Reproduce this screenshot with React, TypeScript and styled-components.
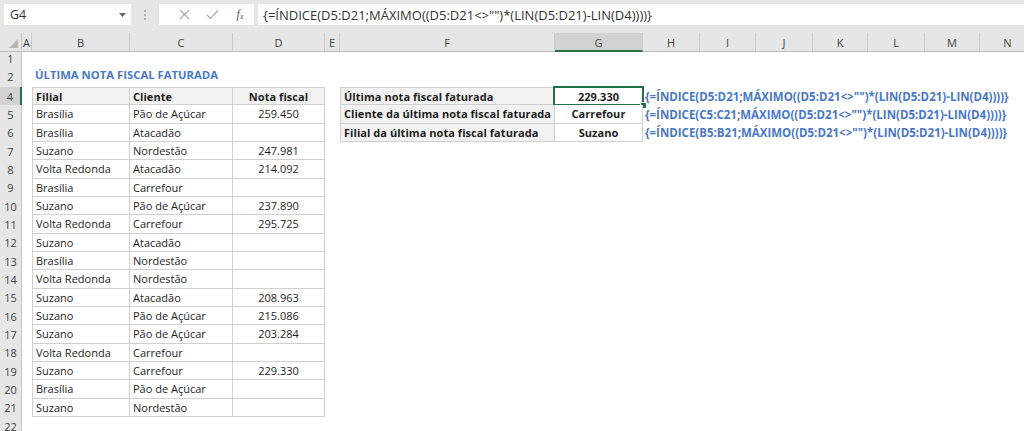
import React from "react";
import styled, { createGlobalStyle, css } from "styled-components";

const GlobalStyle = createGlobalStyle`
  html, body { margin: 0; padding: 0; background: #ffffff; }
  body { font-family: "Open Sans", "Noto Sans", Arial, sans-serif; overflow: hidden; }
`;

const Page = styled.div`
  width: 1024px;
  height: 431px;
  overflow: hidden;
  display: flex;
  flex-direction: column;
  background: #ffffff;
`;

const FormulaBar = styled.div`
  display: flex;
  align-items: flex-start;
  height: 33px;
  box-sizing: border-box;
  padding: 4px 0 0 4px;
  background: #e6e6e6;
  flex-shrink: 0;
`;

const NameBox = styled.div`
  width: 127px;
  height: 21px;
  background: #ffffff;
  display: flex;
  align-items: center;
  justify-content: space-between;
  box-sizing: border-box;
  padding: 0 5px 0 6px;
  font-size: 12.5px;
  color: #333;
`;

const Grip = styled.div`
  width: 28px;
  height: 21px;
  display: flex;
  flex-direction: column;
  align-items: center;
  justify-content: center;
  gap: 2px;
  & span {
    width: 2px;
    height: 2px;
    background: #b0b0b0;
  }
`;

const ButtonGroup = styled.div`
  width: 95px;
  height: 21px;
  background: #ffffff;
  display: flex;
  align-items: center;
  box-sizing: border-box;
  padding-left: 11px;
`;

const BarButton = styled.div`
  width: 31px;
  height: 21px;
  display: flex;
  align-items: center;
  justify-content: center;
`;

const FxLabel = styled.span`
  font-family: "Liberation Serif", "DejaVu Serif", serif;
  font-style: italic;
  font-size: 12px;
  color: #555;
  & sub {
    font-size: 8px;
    vertical-align: -1px;
  }
`;

const FormulaInput = styled.div`
  flex: 1;
  margin-left: 4px;
  height: 21px;
  background: #ffffff;
  display: flex;
  align-items: center;
  padding-left: 5px;
  font-size: 13px;
  color: #333;
  white-space: nowrap;
  overflow: hidden;
`;

const Sheet = styled.div`
  display: grid;
  grid-template-columns: 22px 10px 98px 103px 92px 15px 215px 88px 57px 56px 57px 55px 57px 55px 56px;
  grid-template-rows: 19px 13px 22px repeat(19, 18.33px);
  width: 1036px;
  background: #ffffff;
  font-size: 11px;
`;

const Place = css<{ $row: number; $col: number; $span?: number }>`
  grid-row: ${(p) => p.$row};
  grid-column: ${(p) => p.$col} / span ${(p) => p.$span ?? 1};
`;

const Corner = styled.div<{ $row: number; $col: number }>`
  ${Place};
  background: #e6e6e6;
  border-right: 1px solid #c6c6c6;
  border-bottom: 1px solid #bdbdbd;
  box-sizing: border-box;
  display: flex;
  align-items: flex-end;
  justify-content: flex-end;
  padding: 0 3px 3px 0;
`;

const ColHead = styled.div<{ $row: number; $col: number; $selected?: boolean }>`
  ${Place};
  box-sizing: border-box;
  background: ${(p) => (p.$selected ? "#d2d2d2" : "#e6e6e6")};
  border-right: 1px solid #cbcbcb;
  border-bottom: ${(p) => (p.$selected ? "2px solid #217346" : "1px solid #bdbdbd")};
  display: flex;
  align-items: center;
  justify-content: center;
  color: #444;
  font-size: 11px;
  padding-top: 1px;
`;

const RowHead = styled.div<{ $row: number; $col: number; $selected?: boolean }>`
  ${Place};
  box-sizing: border-box;
  background: ${(p) => (p.$selected ? "#d2d2d2" : "#e6e6e6")};
  border-right: ${(p) => (p.$selected ? "2px solid #217346" : "1px solid #c6c6c6")};
  display: flex;
  align-items: center;
  justify-content: center;
  color: #444;
  font-size: 11px;
  overflow: hidden;
`;

const Title = styled.div<{ $row: number; $col: number; $span?: number }>`
  ${Place};
  display: flex;
  align-items: center;
  padding: 0 0 3px 3px;
  font-weight: 700;
  font-size: 11.3px;
  color: #4a78c8;
  white-space: nowrap;
`;

type CellProps = {
  $row: number;
  $col: number;
  $span?: number;
  $bold?: boolean;
  $align?: "left" | "center";
  $shade?: boolean;
  $top?: boolean;
  $left?: boolean;
};

const Cell = styled.div<CellProps>`
  ${Place};
  position: relative;
  box-sizing: border-box;
  display: flex;
  align-items: center;
  justify-content: ${(p) => (p.$align === "center" ? "center" : "flex-start")};
  padding-left: ${(p) => (p.$align === "center" ? "0" : "3px")};
  background: ${(p) => (p.$shade ? "#f2f2f2" : "#ffffff")};
  border-right: 1px solid #d0d0d0;
  border-bottom: 1px solid #d0d0d0;
  border-top: ${(p) => (p.$top ? "1px solid #d0d0d0" : "none")};
  border-left: ${(p) => (p.$left ? "1px solid #d0d0d0" : "none")};
  font-weight: ${(p) => (p.$bold ? 700 : 400)};
  letter-spacing: ${(p) => (p.$bold ? "0.05px" : "0")};
  font-size: 11px;
  color: #1e1e1e;
  white-space: nowrap;
`;

const FormulaText = styled.div<{ $row: number; $col: number; $span?: number }>`
  ${Place};
  display: flex;
  align-items: center;
  padding-left: 2px;
  font-weight: 700;
  font-size: 11.5px;
  color: #4a78c8;
  white-space: nowrap;
`;

const Selection = styled.div`
  position: absolute;
  left: -2px;
  top: -2px;
  right: -2px;
  bottom: -2px;
  border: 2px solid #217346;
  pointer-events: none;
`;

const FillHandle = styled.div`
  position: absolute;
  right: -5px;
  bottom: -5px;
  width: 5px;
  height: 5px;
  background: #217346;
  border: 1px solid #ffffff;
`;

const columns = ["A", "B", "C", "D", "E", "F", "G", "H", "I", "J", "K", "L", "M", "N"];

const data: [string, string, string][] = [
  ["Brasília", "Pão de Açúcar", "259.450"],
  ["Brasília", "Atacadão", ""],
  ["Suzano", "Nordestão", "247.981"],
  ["Volta Redonda", "Atacadão", "214.092"],
  ["Brasília", "Carrefour", ""],
  ["Suzano", "Pão de Açúcar", "237.890"],
  ["Volta Redonda", "Carrefour", "295.725"],
  ["Suzano", "Atacadão", ""],
  ["Brasília", "Nordestão", ""],
  ["Volta Redonda", "Nordestão", ""],
  ["Suzano", "Atacadão", "208.963"],
  ["Suzano", "Pão de Açúcar", "215.086"],
  ["Suzano", "Pão de Açúcar", "203.284"],
  ["Volta Redonda", "Carrefour", ""],
  ["Suzano", "Carrefour", "229.330"],
  ["Brasília", "Pão de Açúcar", ""],
  ["Suzano", "Nordestão", ""],
];

const tail = ';MÁXIMO((D5:D21<>"")*(LIN(D5:D21)-LIN(D4))))}';

const summary: [string, string, string][] = [
  ["Última nota fiscal faturada", "229.330", "{=ÍNDICE(D5:D21" + tail],
  ["Cliente da última nota fiscal faturada", "Carrefour", "{=ÍNDICE(C5:C21" + tail],
  ["Filial da última nota fiscal faturada", "Suzano", "{=ÍNDICE(B5:B21" + tail],
];

const rowNumbers: { label: string; gridRow: number }[] = [
  { label: "1", gridRow: 2 },
  { label: "2", gridRow: 3 },
  ...Array.from({ length: 19 }, (_, i) => ({ label: String(i + 4), gridRow: i + 4 })),
];

export default function App() {
  return (
    <Page>
      <GlobalStyle />
      <FormulaBar>
        <NameBox>
          <span>G4</span>
          <svg width="7" height="4" viewBox="0 0 7 4">
            <path d="M0 0 L7 0 L3.5 4 Z" fill="#666" />
          </svg>
        </NameBox>
        <Grip>
          <span />
          <span />
          <span />
        </Grip>
        <ButtonGroup>
          <BarButton>
            <svg width="11" height="11" viewBox="0 0 11 11">
              <path d="M1 1 L10 10 M10 1 L1 10" stroke="#a8a8a8" strokeWidth="1.1" fill="none" />
            </svg>
          </BarButton>
          <BarButton>
            <svg width="13" height="11" viewBox="0 0 13 11">
              <path d="M1 6 L4.5 9.5 L12 1.5" stroke="#a8a8a8" strokeWidth="1.1" fill="none" />
            </svg>
          </BarButton>
          <BarButton>
            <FxLabel>
              f<sub>x</sub>
            </FxLabel>
          </BarButton>
        </ButtonGroup>
        <FormulaInput>{'{=ÍNDICE(D5:D21' + tail}</FormulaInput>
      </FormulaBar>

      <Sheet>
        <Corner $row={1} $col={1}>
          <svg width="9" height="9" viewBox="0 0 9 9">
            <path d="M9 0 L9 9 L0 9 Z" fill="#b6b6b6" />
          </svg>
        </Corner>
        {columns.map((c, i) => (
          <ColHead key={c} $row={1} $col={i + 2} $selected={c === "G"}>
            {c}
          </ColHead>
        ))}
        {rowNumbers.map((r) => (
          <RowHead key={r.label} $row={r.gridRow} $col={1} $selected={r.label === "4"}>
            {r.label}
          </RowHead>
        ))}

        <Title $row={3} $col={3} $span={4}>
          ÚLTIMA NOTA FISCAL FATURADA
        </Title>

        <Cell $row={4} $col={3} $bold $shade $top $left>Filial</Cell>
        <Cell $row={4} $col={4} $bold $shade $top>Cliente</Cell>
        <Cell $row={4} $col={5} $bold $shade $top $align="center">Nota fiscal</Cell>

        {data.map(([filial, cliente, nota], i) => (
          <React.Fragment key={i}>
            <Cell $row={i + 5} $col={3} $left>{filial}</Cell>
            <Cell $row={i + 5} $col={4}>{cliente}</Cell>
            <Cell $row={i + 5} $col={5} $align="center">{nota}</Cell>
          </React.Fragment>
        ))}

        {summary.map(([label, value, formula], i) => (
          <React.Fragment key={label}>
            <Cell $row={i + 4} $col={7} $bold $shade $left $top={i === 0}>{label}</Cell>
            <Cell $row={i + 4} $col={8} $bold $align="center" $top={i === 0}>
              {value}
              {i === 0 && (
                <Selection>
                  <FillHandle />
                </Selection>
              )}
            </Cell>
            <FormulaText $row={i + 4} $col={9} $span={7}>{formula}</FormulaText>
          </React.Fragment>
        ))}
      </Sheet>
    </Page>
  );
}
